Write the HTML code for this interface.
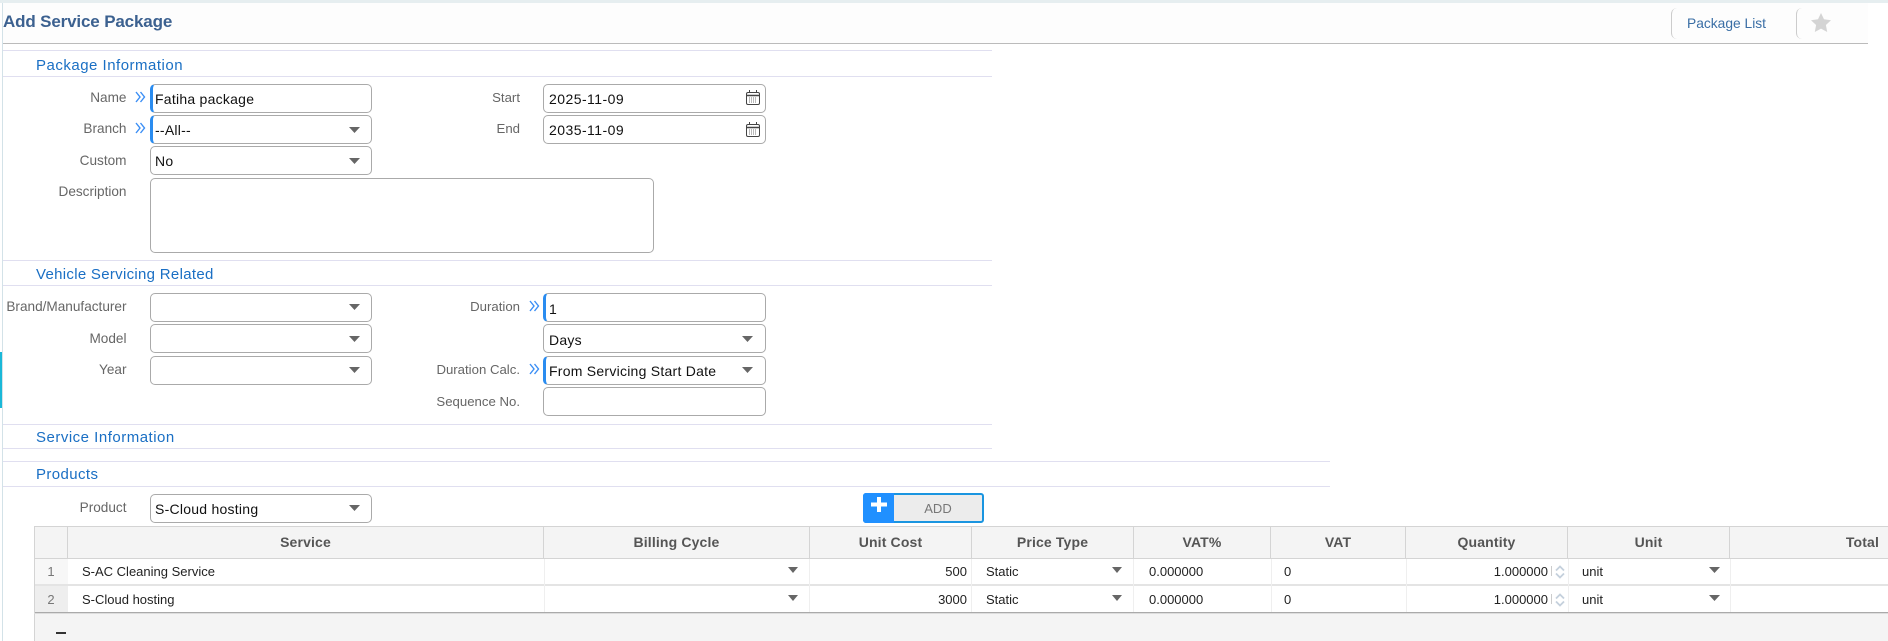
<!DOCTYPE html>
<html><head><meta charset="utf-8">
<style>
html,body{margin:0;padding:0;background:#fff}
#p{position:relative;width:1888px;height:641px;overflow:hidden;background:#fff;font-family:"Liberation Sans",sans-serif}
#p div,#p svg{position:absolute}
.h{height:1px;background:#e0dff0;left:3px}
.s{left:36px;font-size:15px;line-height:20px;color:#1a6fc4;white-space:nowrap;letter-spacing:.5px}
.l{font-size:13px;line-height:16px;color:#666;text-align:right;white-space:nowrap}
.l1{left:0;width:126.500px;font-size:13.600px}
.l2{left:380px;width:140px;font-size:13.200px}
.i{box-sizing:border-box;border:1px solid #aaa;border-radius:5px;background:#fff;height:29px;font-size:14px;line-height:29px;color:#111;padding-left:4px;white-space:nowrap;letter-spacing:.25px}
.c1{left:150px;width:222px}
.c2{left:543px;width:223px;padding-left:5px}
.d{letter-spacing:.45px}
.r{border-left:3px solid #2a8cf0;padding-left:2px}
.c2.r{padding-left:3px}
.th{top:526px;height:33px;box-sizing:border-box;background:#f4f4f4;border-top:1px solid #d4d4d4;border-bottom:1px solid #d4d4d4;border-right:1px solid #d4d4d4;font-size:14px;font-weight:bold;color:#555;text-align:center;line-height:31px;white-space:nowrap;letter-spacing:.15px}
.t{font-size:13px;line-height:16px;color:#222;white-space:nowrap}
.v{width:1px;background:#efefef;top:559px;height:53px}
</style></head><body><div id="p">
<div style="left:0;top:0;width:1888px;height:3px;background:#e6eef0"></div>
<div style="left:2px;top:3px;width:1px;height:638px;background:#d3e2e8"></div>
<div style="left:0;top:352px;width:2px;height:56px;background:#1ab8d8"></div>
<div style="left:3px;top:3px;width:1865px;height:40px;background:#fdfdfd"></div>
<div style="left:3px;top:43px;width:1865px;height:1px;background:#bbb"></div>
<div style="left:3px;top:12px;font-size:17px;line-height:20px;font-weight:bold;color:#3c6190;white-space:nowrap;letter-spacing:-.15px">Add Service Package</div>

<div style="left:1671px;top:8px;width:8px;height:31px;box-sizing:border-box;border-left:1px solid #ccc;border-radius:6px 0 0 6px"></div>
<div style="left:1687px;top:16px;font-size:13.800px;line-height:16px;color:#3a6ea5;white-space:nowrap">Package List</div>
<div style="left:1796px;top:8px;width:8px;height:31px;box-sizing:border-box;border-left:1px solid #ccc;border-radius:6px 0 0 6px"></div>
<svg style="left:1811px;top:13px" width="20" height="19" viewBox="0 0 20 19"><path d="M10 0l3 6.300 7 .9-5.100 4.800 1.300 7L10 15.600l-6.200 3.400 1.300-7L0 7.200l7-.9z" fill="#d4d4d4"/></svg>

<div class="h" style="top:50px;width:989px"></div>
<div class="s" style="top:56px">Package Information</div>
<div class="h" style="top:76px;width:989px"></div>

<div class="l l1" style="top:90px">Name</div>
<div class="l l1" style="top:121px">Branch</div>
<div class="l l1" style="top:153px">Custom</div>
<div class="l l1" style="top:184px">Description</div>
<svg style="left:134.500px;top:91px" width="11" height="12" viewBox="0 0 11 12"><path d="M1 1l4 5-4 5M5.500 1l4 5-4 5" fill="none" stroke="#3a8ef5" stroke-width="1.400"/></svg>
<svg style="left:134.500px;top:122px" width="11" height="12" viewBox="0 0 11 12"><path d="M1 1l4 5-4 5M5.500 1l4 5-4 5" fill="none" stroke="#3a8ef5" stroke-width="1.400"/></svg>
<div class="i c1 r" style="top:84px">Fatiha package</div>
<div class="i c1 r" style="top:115px">--All--</div>
<div class="i c1" style="top:146px">No</div>
<div class="i" style="left:150px;top:178px;width:504px;height:75px"></div>
<svg style="left:349px;top:127px" width="11" height="6"><path d="M0 0h11L5.500 6z" fill="#666"/></svg>
<svg style="left:349px;top:158px" width="11" height="6"><path d="M0 0h11L5.500 6z" fill="#666"/></svg>

<div class="l l2" style="top:90px">Start</div>
<div class="l l2" style="top:121px">End</div>
<div class="i c2 d" style="top:84px">2025-11-09</div>
<div class="i c2 d" style="top:115px">2035-11-09</div>
<svg style="left:746px;top:90px" width="14" height="15" viewBox="0 0 14 15"><rect x=".5" y="2.500" width="13" height="12" rx="1.500" fill="#fff" stroke="#444"/><path d="M1 5.500h12" stroke="#444" stroke-width="1.500"/><path d="M3.500 0v3M10.500 0v3" stroke="#444"/><path d="M3 8h8M3 10h8M3 12h8" stroke="#777" stroke-dasharray="1 1"/></svg>
<svg style="left:746px;top:122px" width="14" height="15" viewBox="0 0 14 15"><rect x=".5" y="2.500" width="13" height="12" rx="1.500" fill="#fff" stroke="#444"/><path d="M1 5.500h12" stroke="#444" stroke-width="1.500"/><path d="M3.500 0v3M10.500 0v3" stroke="#444"/><path d="M3 8h8M3 10h8M3 12h8" stroke="#777" stroke-dasharray="1 1"/></svg>

<div class="h" style="top:260px;width:989px"></div>
<div class="s" style="top:265px;letter-spacing:.3px">Vehicle Servicing Related</div>
<div class="h" style="top:285px;width:989px"></div>

<div class="l l1" style="top:299px">Brand/Manufacturer</div>
<div class="l l1" style="top:331px">Model</div>
<div class="l l1" style="top:362px">Year</div>
<div class="i c1" style="top:293px"></div>
<div class="i c1" style="top:324px"></div>
<div class="i c1" style="top:356px"></div>
<svg style="left:349px;top:304px" width="11" height="6"><path d="M0 0h11L5.500 6z" fill="#666"/></svg>
<svg style="left:349px;top:336px" width="11" height="6"><path d="M0 0h11L5.500 6z" fill="#666"/></svg>
<svg style="left:349px;top:367px" width="11" height="6"><path d="M0 0h11L5.500 6z" fill="#666"/></svg>

<div class="l l2" style="top:299px">Duration</div>
<div class="l l2" style="top:362px">Duration Calc.</div>
<div class="l l2" style="top:394px">Sequence No.</div>
<svg style="left:528.500px;top:300px" width="11" height="12" viewBox="0 0 11 12"><path d="M1 1l4 5-4 5M5.500 1l4 5-4 5" fill="none" stroke="#3a8ef5" stroke-width="1.400"/></svg>
<svg style="left:528.500px;top:363px" width="11" height="12" viewBox="0 0 11 12"><path d="M1 1l4 5-4 5M5.500 1l4 5-4 5" fill="none" stroke="#3a8ef5" stroke-width="1.400"/></svg>
<div class="i c2 r" style="top:293px;line-height:31px">1</div>
<div class="i c2" style="top:324px;line-height:30px">Days</div>
<div class="i c2 r" style="top:356px">From Servicing Start Date</div>
<div class="i c2" style="top:387px"></div>
<svg style="left:742px;top:336px" width="11" height="6"><path d="M0 0h11L5.500 6z" fill="#666"/></svg>
<svg style="left:742px;top:367px" width="11" height="6"><path d="M0 0h11L5.500 6z" fill="#666"/></svg>

<div class="h" style="top:424px;width:989px"></div>
<div class="s" style="top:427.500px">Service Information</div>
<div class="h" style="top:448px;width:989px"></div>
<div class="h" style="top:461px;width:1327px"></div>
<div class="s" style="top:465px;letter-spacing:.4px">Products</div>
<div class="h" style="top:486px;width:1327px"></div>

<div class="l l1" style="top:500px">Product</div>
<div class="i c1" style="top:494px">S-Cloud hosting</div>
<svg style="left:349px;top:505px" width="11" height="6"><path d="M0 0h11L5.500 6z" fill="#666"/></svg>

<div style="left:863px;top:493px;width:121px;height:30px;box-sizing:border-box;border:2px solid #1a95e0;border-radius:3px;background:#ececec"></div>
<div style="left:863px;top:493px;width:31px;height:30px;background:#2090ff;border-radius:3px 0 0 3px"></div>
<svg style="left:871px;top:497px" width="16" height="15"><path d="M6 0h4v5.500h6v4h-6V15H6V9.500H0v-4h6z" fill="#fff"/></svg>
<div style="left:893px;top:501px;width:90px;text-align:center;font-size:13px;line-height:16px;color:#777">ADD</div>

<div style="left:34px;top:526px;width:1854px;height:115px;background:#f4f4f4"></div>
<div style="left:34px;top:526px;width:1px;height:115px;background:#d4d4d4"></div>
<div class="th" style="left:35px;width:33px"></div>
<div class="th" style="left:68px;width:476px">Service</div>
<div class="th" style="left:544px;width:266px">Billing Cycle</div>
<div class="th" style="left:810px;width:162px">Unit Cost</div>
<div class="th" style="left:972px;width:162px">Price Type</div>
<div class="th" style="left:1134px;width:137px">VAT%</div>
<div class="th" style="left:1271px;width:135px">VAT</div>
<div class="th" style="left:1406px;width:162px">Quantity</div>
<div class="th" style="left:1568px;width:162px">Unit</div>
<div class="th" style="left:1730px;width:158px;border-right:0;text-align:right;padding-right:9px">Total</div>

<div style="left:68px;top:559px;width:1820px;height:53px;background:#fff"></div>
<div style="left:35px;top:559px;width:33px;height:25px;background:#f7f7f7"></div>
<div style="left:35px;top:586px;width:33px;height:26px;background:#eee"></div>
<div style="left:35px;top:584px;width:1853px;height:2px;background:#e4e4e4"></div>
<div style="left:35px;top:612px;width:1853px;height:1px;background:#aaa"></div>
<div style="left:34px;top:613px;width:1854px;height:1px;background:#ddd"></div>
<div class="v" style="left:544px"></div><div class="v" style="left:809px"></div><div class="v" style="left:971px"></div><div class="v" style="left:1133px"></div><div class="v" style="left:1271px"></div><div class="v" style="left:1406px"></div><div class="v" style="left:1568px"></div><div class="v" style="left:1730px"></div>

<div class="t" style="left:36px;width:30px;text-align:center;top:564px;color:#777">1</div>
<div class="t" style="left:36px;width:30px;text-align:center;top:592px;color:#777">2</div>
<div class="t" style="left:82px;top:564px">S-AC Cleaning Service</div>
<div class="t" style="left:82px;top:592px">S-Cloud hosting</div>
<div class="t" style="right:921px;top:564px">500</div>
<div class="t" style="right:921px;top:592px">3000</div>
<div class="t" style="left:986px;top:564px">Static</div>
<div class="t" style="left:986px;top:592px">Static</div>
<div class="t" style="left:1149px;top:564px">0.000000</div>
<div class="t" style="left:1149px;top:592px">0.000000</div>
<div class="t" style="left:1284px;top:564px">0</div>
<div class="t" style="left:1284px;top:592px">0</div>
<div class="t" style="right:340px;top:564px">1.000000</div>
<div class="t" style="right:340px;top:592px">1.000000</div>
<div class="t" style="left:1582px;top:564px">unit</div>
<div class="t" style="left:1582px;top:592px">unit</div>

<svg style="left:788px;top:567px" width="10" height="6"><path d="M0 0h10L5 6z" fill="#666"/></svg>
<svg style="left:788px;top:595px" width="10" height="6"><path d="M0 0h10L5 6z" fill="#666"/></svg>
<svg style="left:1112px;top:567px" width="10" height="6"><path d="M0 0h10L5 6z" fill="#666"/></svg>
<svg style="left:1112px;top:595px" width="10" height="6"><path d="M0 0h10L5 6z" fill="#666"/></svg>
<svg style="left:1709px;top:567px" width="11" height="6"><path d="M0 0h11L5.500 6z" fill="#666"/></svg>
<svg style="left:1709px;top:595px" width="11" height="6"><path d="M0 0h11L5.500 6z" fill="#666"/></svg>
<svg style="left:1550px;top:565px" width="16" height="14" viewBox="0 0 16 14"><path d="M1.500 1v10" stroke="#ccc"/><path d="M6 5.500l4-4 4 4M6 8.500l4 4 4-4" fill="none" stroke="#c5d0dc" stroke-width="1.800"/></svg>
<svg style="left:1550px;top:593px" width="16" height="14" viewBox="0 0 16 14"><path d="M1.500 1v10" stroke="#ccc"/><path d="M6 5.500l4-4 4 4M6 8.500l4 4 4-4" fill="none" stroke="#c5d0dc" stroke-width="1.800"/></svg>

<div style="left:56px;top:632px;width:10px;height:2px;background:#333"></div>
</div></body></html>
